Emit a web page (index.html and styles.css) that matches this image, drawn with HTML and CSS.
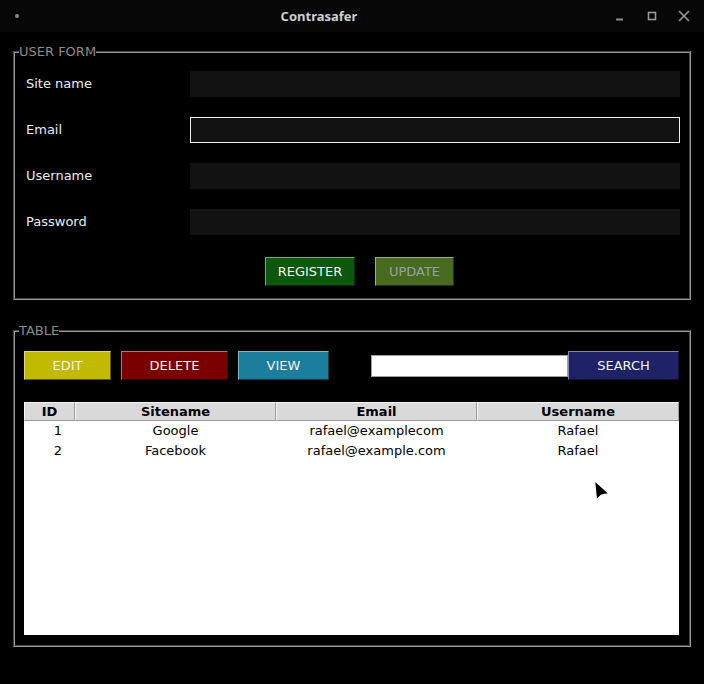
FILE: index.html
```html
<!DOCTYPE html>
<html lang="en">
<head>
<meta charset="utf-8">
<title>Contrasafer</title>
<link rel="stylesheet" href="styles.css">
</head>
<body>
<div class="titlebar">
  <div class="tb-left"><span class="tb-dot"></span></div>
  <div class="tb-title">Contrasafer</div>
  <div class="tb-controls">
    <span class="tb-btn"><svg width="10" height="10" viewBox="0 0 10 10"><path d="M1 8.5H8" stroke="#8a8a8a" stroke-width="2"/></svg></span>
    <span class="tb-btn"><svg width="10" height="10" viewBox="0 0 10 10"><rect x="1.5" y="1.5" width="7" height="7" fill="none" stroke="#9a9a9a" stroke-width="1.6"/></svg></span>
    <span class="tb-btn"><svg width="12" height="12" viewBox="0 0 12 12"><path d="M1 1L11 11M11 1L1 11" stroke="#9a9a9a" stroke-width="1.6"/></svg></span>
  </div>
</div>

<main class="app">
  <fieldset class="group form-group">
    <legend>USER FORM</legend>
    <div class="form-grid">
      <label class="field-label">Site name</label><div class="field-input"></div>
      <label class="field-label">Email</label><div class="field-input focused"></div>
      <label class="field-label">Username</label><div class="field-input"></div>
      <label class="field-label">Password</label><div class="field-input"></div>
    </div>
    <div class="form-actions">
      <button class="btn btn-register">REGISTER</button>
      <button class="btn btn-update">UPDATE</button>
    </div>
  </fieldset>

  <fieldset class="group table-group">
    <legend>TABLE</legend>
    <div class="toolbar">
      <button class="btn btn-edit">EDIT</button>
      <button class="btn btn-delete">DELETE</button>
      <button class="btn btn-view">VIEW</button>
      <div class="search-input"></div>
      <button class="btn btn-search">SEARCH</button>
    </div>
    <div class="table">
      <div class="thead">
        <div class="th">ID</div>
        <div class="th">Sitename</div>
        <div class="th">Email</div>
        <div class="th">Username</div>
      </div>
      <div class="tr">
        <div class="td id">1</div>
        <div class="td">Google</div>
        <div class="td">rafael@examplecom</div>
        <div class="td">Rafael</div>
      </div>
      <div class="tr">
        <div class="td id">2</div>
        <div class="td">Facebook</div>
        <div class="td">rafael@example.com</div>
        <div class="td">Rafael</div>
      </div>
      <svg class="cursor" width="20" height="24" viewBox="0 0 20 24"><path d="M1.5 1.5L3.5 21L8.5 16L16 14.5Z" fill="#000" stroke="#fff" stroke-width="1.2" stroke-linejoin="round"/></svg>
    </div>
  </fieldset>
</main>
</body>
</html>
```

FILE: styles.css
```css
* { box-sizing: border-box; }

html, body {
  margin: 0;
  padding: 0;
  background: #000;
  width: 704px;
  height: 684px;
  overflow: hidden;
  font-family: "DejaVu Sans", sans-serif;
  font-size: 13px;
}

.titlebar {
  height: 32px;
  background: #070707;
  display: flex;
  align-items: center;
}
.tb-left {
  width: 34px;
  display: flex;
  align-items: center;
  padding-left: 15px;
}
.tb-dot {
  width: 4px;
  height: 4px;
  border-radius: 50%;
  background: #8a8a8a;
}
.tb-title {
  flex: 1;
  text-align: center;
  font-family: "Noto Sans", sans-serif;
  font-weight: 700;
  font-size: 13px;
  color: #cfcfcf;
}
.tb-controls {
  width: 98px;
  margin-right: 2px;
  display: flex;
}
.tb-btn {
  width: 32px;
  display: flex;
  justify-content: center;
  align-items: center;
}

.app { padding-left: 13px; }

.group {
  width: 678px;
  margin: 0;
  border: 2px groove #9a9a9a;
  min-inline-size: 0;
}
.group legend {
  padding: 0;
  line-height: 16px;
  color: #8c8c8c;
  font-size: 13px;
}

.form-group {
  margin-top: 12px;
  padding: 11px 9px 12px 11px;
}
.form-group legend { margin-left: -7px; }
.form-grid {
  display: grid;
  grid-template-columns: 164px 490px;
  grid-auto-rows: 26px;
  row-gap: 20px;
  align-items: center;
}
.field-label {
  color: #ececec;
  padding-bottom: 2px;
}
.field-input {
  height: 26px;
  background: #121212;
}
.field-input.focused { border: 1px solid #f0f0f0; }

.form-actions {
  display: flex;
  gap: 20px;
  margin-top: 22px;
  padding-left: 239px;
}

.btn {
  font-family: "DejaVu Sans", sans-serif;
  font-size: 13px;
  height: 29px;
  padding: 0;
  color: #f2f2f2;
  border: 1px solid;
  border-color: rgba(255,255,255,0.45) rgba(0,0,0,0.5) rgba(0,0,0,0.5) rgba(255,255,255,0.45);
}
.btn-register { width: 90px; background: #0b580b; }
.btn-update { width: 79px; background: #486a1f; color: #93a3a3; }

.table-group {
  margin-top: 23px;
  padding: 12px 10px 10px 9px;
}
.table-group legend { margin-left: -5px; }
.toolbar {
  display: flex;
  align-items: center;
  height: 29px;
}
.btn-edit { width: 87px; background: #c2ba00; }
.btn-delete { width: 107px; background: #7a0000; margin-left: 10px; }
.btn-view { width: 91px; background: #1b7e9d; margin-left: 10px; }
.btn-search { width: 111px; background: #1f2266; }
.search-input {
  width: 197px;
  height: 22px;
  margin-left: 42px;
  background: #fff;
  border: 1px solid #a0a0a0;
}

.table {
  position: relative;
  margin-top: 22px;
  width: 655px;
  height: 233px;
  background: #fff;
  color: #000;
}
.thead, .tr {
  display: grid;
  grid-template-columns: 51px 201px 201px 202px;
}
.thead { height: 19px; }
.th {
  background: #d9d9d9;
  font-weight: 700;
  text-align: center;
  line-height: 17px;
  border: 1px solid;
  border-color: #f4f4f4 #9a9a9a #9a9a9a #f4f4f4;
}
.tr { height: 20px; }
.td {
  text-align: center;
  line-height: 19px;
}
.td.id {
  text-align: right;
  padding-right: 13px;
}
.cursor {
  position: absolute;
  left: 569px;
  top: 77px;
}
```
